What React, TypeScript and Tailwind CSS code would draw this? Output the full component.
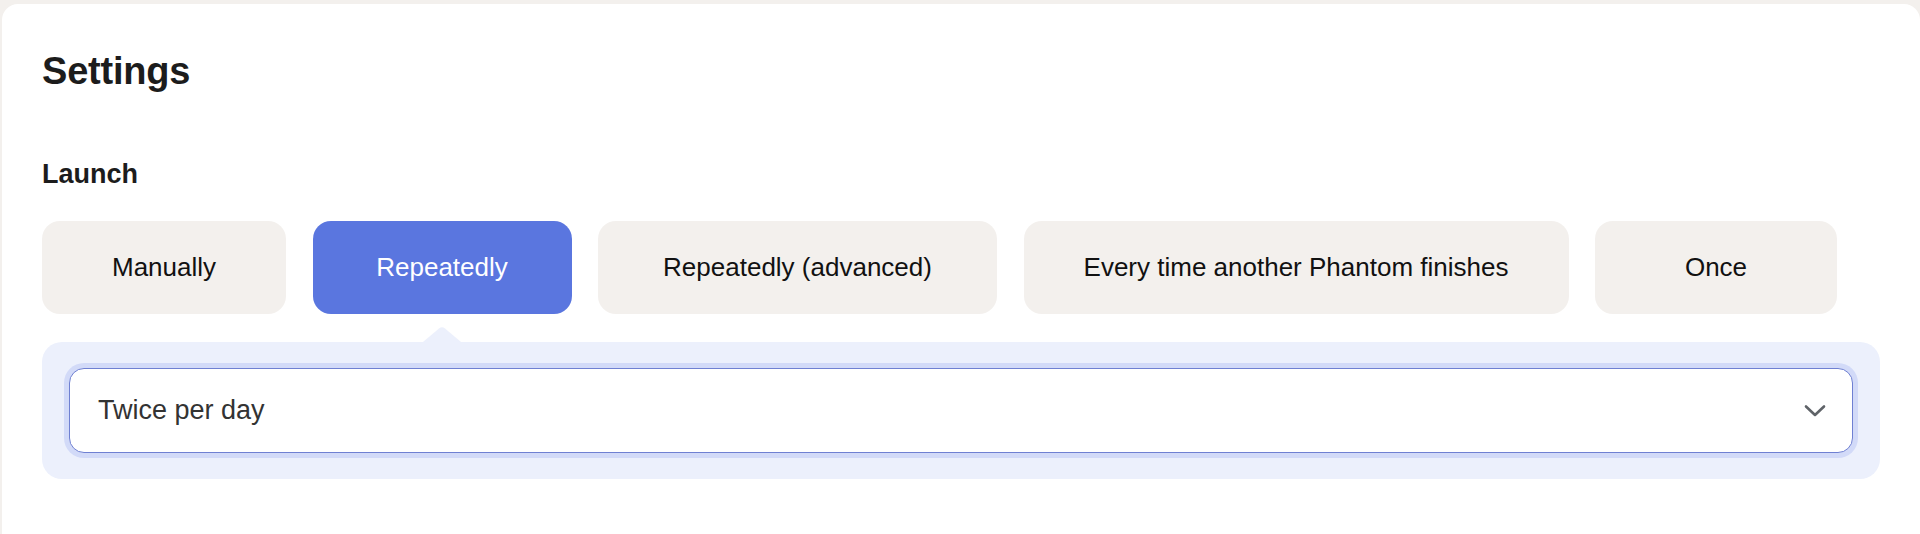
import React from "react";

const options = [
  { label: "Manually", w: "w-[244px]", active: false },
  { label: "Repeatedly", w: "w-[259px]", active: true },
  { label: "Repeatedly (advanced)", w: "w-[399px]", active: false },
  { label: "Every time another Phantom finishes", w: "w-[545px]", active: false },
  { label: "Once", w: "w-[242px]", active: false },
];

export default function App() {
  return (
    <div
      className="min-h-[534px] h-[534px] overflow-hidden bg-[#f3f0ed] pl-[2px] pt-[4px]"
      style={{ fontFamily: '"Liberation Sans", Arial, sans-serif' }}
    >
      <div className="h-[530px] rounded-t-[16px] bg-white px-[40px] pt-[43px]">
        <h1 className="text-[38px] leading-[48px] font-bold text-[#1c1c1c] tracking-[-0.2px]">
          Settings
        </h1>
        <h2 className="mt-[63px] text-[27px] leading-[32px] font-bold text-[#1c1c1c]">
          Launch
        </h2>
        <div className="mt-[31px] flex gap-[26.5px]">
          {options.map((o) => (
            <button
              key={o.label}
              className={
                o.active
                  ? `${o.w} h-[93px] shrink-0 rounded-[18px] bg-[#5a76df] text-[26px] text-white`
                  : `${o.w} h-[93px] shrink-0 rounded-[18px] bg-[#f3f0ed] text-[26px] text-[#111111]`
              }
            >
              {o.label}
            </button>
          ))}
        </div>
        <div className="relative mt-[28px] rounded-[20px] bg-[#ecf0fc] px-[27px] py-[26px]">
          <svg
            className="absolute left-[381px] top-[-16px]"
            width="38"
            height="16"
            viewBox="0 0 38 16"
          >
            <path d="M0 16 L16 2.5 Q19 0 22 2.5 L38 16 Z" fill="#ecf0fc" />
          </svg>
          <div className="flex h-[85px] items-center justify-between rounded-[15px] border border-[#6f80d2] bg-white pl-[28px] pr-[26px] shadow-[0_0_0_5px_#d2daf8]">
            <span className="text-[27px] text-[#333333]">Twice per day</span>
            <svg width="22" height="14" viewBox="0 0 22 14" fill="none">
              <path
                d="M2 2.5 L11 11 L20 2.5"
                stroke="#5f6368"
                strokeWidth="2.6"
                strokeLinecap="round"
                strokeLinejoin="round"
              />
            </svg>
          </div>
        </div>
      </div>
    </div>
  );
}
